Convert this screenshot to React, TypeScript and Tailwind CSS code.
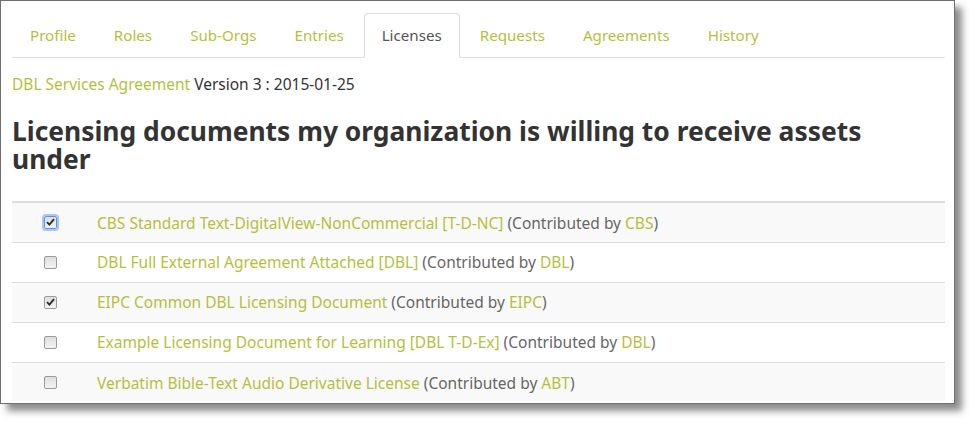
import React from "react";

type LicenseRow = {
  name: string;
  contributor: string;
  checked: boolean;
  focused?: boolean;
};

const tabs = ["Profile", "Roles", "Sub-Orgs", "Entries", "Licenses", "Requests", "Agreements", "History"];

const rows: LicenseRow[] = [
  { name: "CBS Standard Text-DigitalView-NonCommercial [T-D-NC]", contributor: "CBS", checked: true, focused: true },
  { name: "DBL Full External Agreement Attached [DBL]", contributor: "DBL", checked: false },
  { name: "EIPC Common DBL Licensing Document", contributor: "EIPC", checked: true },
  { name: "Example Licensing Document for Learning [DBL T-D-Ex]", contributor: "DBL", checked: false },
  { name: "Verbatim Bible-Text Audio Derivative License", contributor: "ABT", checked: false }
];

function FakeCheckbox({ checked, focused }: { checked: boolean; focused?: boolean }) {
  return (
    <span
      className={`grid h-[13px] w-[13px] place-items-center rounded-[2px] border bg-gradient-to-b from-[#dedede] to-[#f4f4f4] ${
        focused ? "border-[#5b8fe8] outline-2 outline-offset-0 outline-[#a9c6f7]" : "border-[#9a9a9a]"
      }`}
    >
      {checked && (
        <svg width="9" height="8" viewBox="0 0 9 8">
          <path d="M1 4.2 L3.4 6.6 L8 1.2" fill="none" stroke="#2b2b2b" strokeWidth="1.9" />
        </svg>
      )}
    </span>
  );
}

export default function App() {
  return (
    <div className="h-[424px] w-[975px] bg-white" style={{ fontFamily: '"Noto Sans", "Open Sans", sans-serif' }}>
      <div className="h-[404px] w-[955px] overflow-hidden border border-[#6f6f6f] bg-white pl-[11px] pr-[9px] pt-[12px] shadow-[7px_7px_7px_rgba(0,0,0,0.45)]">
        <ul className="flex border-b border-[#dddddd]">
          {tabs.map((tab) => {
            const active = tab === "Licenses";
            return (
              <li
                key={tab}
                className={`-mb-px mr-[2px] flex h-[45px] items-center rounded-t-[4px] border px-[17px] text-[15.15px] ${
                  active
                    ? "border-[#dddddd] border-b-white bg-white text-[#555555]"
                    : "border-transparent text-[#b6bf3d]"
                }`}
              >
                {tab}
              </li>
            );
          })}
        </ul>

        <p className="mt-[14px] text-[15.5px] leading-[24px] text-[#333333]">
          <span className="text-[#b6bf3d]">DBL Services Agreement</span> Version 3 : 2015-01-25
        </p>

        <h3 className="mt-[21px] max-w-[900px] text-[26.4px] font-bold leading-[28px] text-[#333333]">
          Licensing documents my organization is willing to receive assets under
        </h3>

        <table className="mt-[28px] w-full border-collapse text-[15.5px]">
          <tbody>
            {rows.map((row, index) => (
              <tr
                key={row.name}
                className={`${index === 0 ? "border-t-2" : "border-t"} border-[#dddddd] ${
                  index % 2 === 0 ? "bg-[#f9f9f9]" : "bg-white"
                }`}
              >
                <td className="h-[40px] w-[77px] align-middle">
                  <div className="flex justify-center">
                    <FakeCheckbox checked={row.checked} focused={row.focused} />
                  </div>
                </td>
                <td className="px-[8px] pt-[2px] align-middle text-[#666666]">
                  <span className="text-[#b6bf3d]">{row.name}</span> (Contributed by{" "}
                  <span className="text-[#b6bf3d]">{row.contributor}</span>)
                </td>
              </tr>
            ))}
          </tbody>
        </table>
      </div>
    </div>
  );
}
